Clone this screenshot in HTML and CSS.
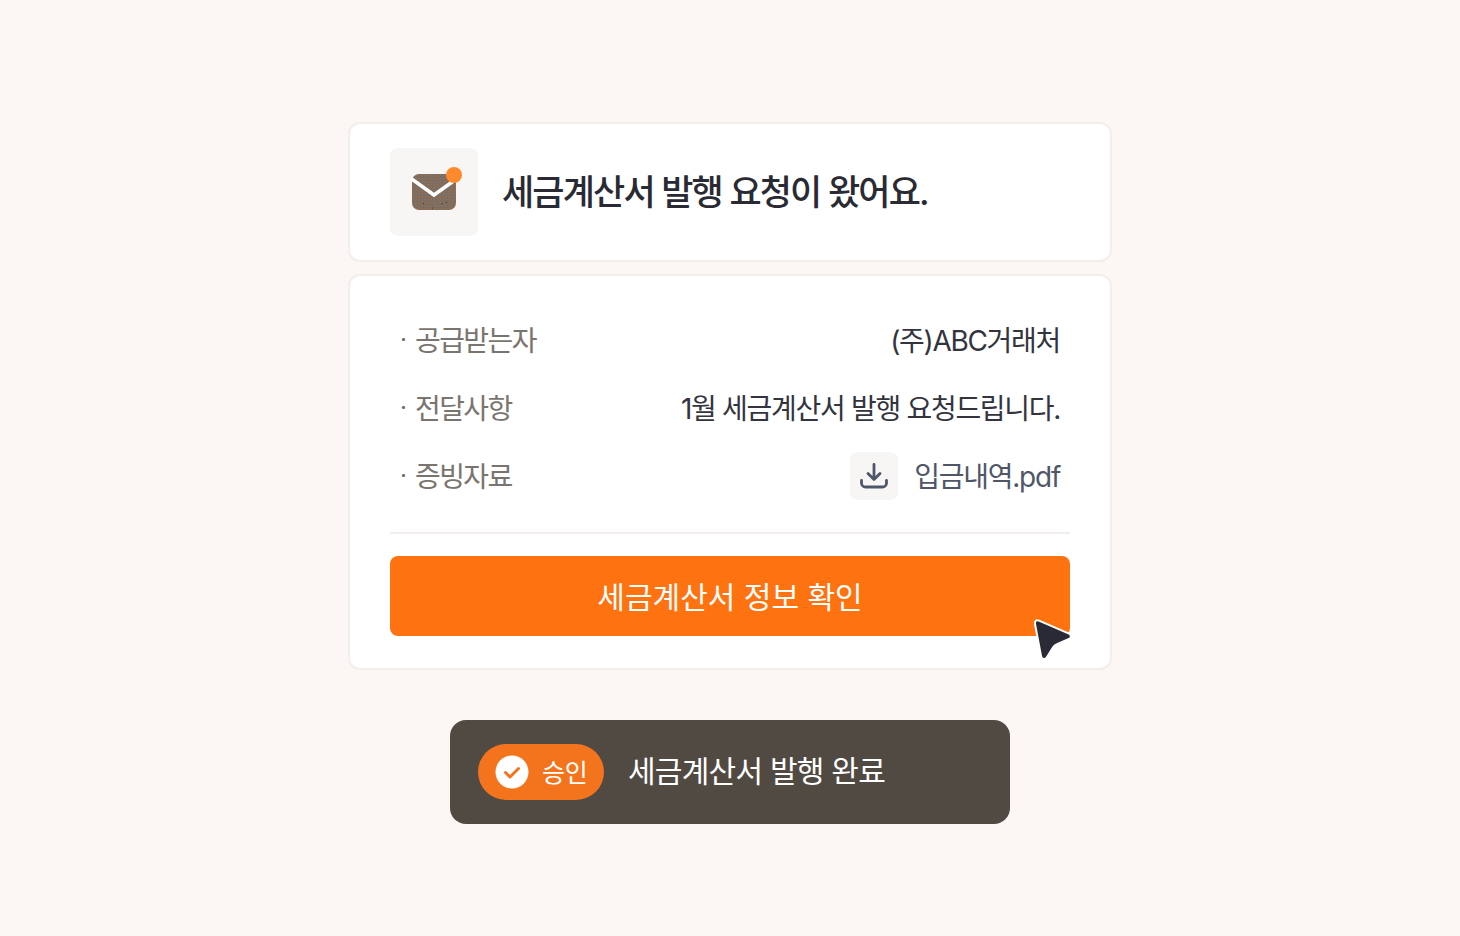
FILE: index.html
```html
<!DOCTYPE html>
<html lang="ko">
<head>
<meta charset="utf-8">
<title>세금계산서 발행 요청</title>
<link rel="stylesheet" href="styles.css">
</head>
<body>
<main class="stack">
  <section class="card header-card">
    <div class="icon-tile">
      <svg class="mail" width="52" height="46" viewBox="0 0 52 46">
        <defs>
          <pattern id="speckle" width="3" height="3" patternUnits="userSpaceOnUse">
            <rect width="3" height="3" fill="#776f67"/>
            <rect x="0" y="0" width="1" height="1" fill="#b06d38"/>
            <rect x="2" y="1" width="1" height="1" fill="#a06b40"/>
          </pattern>
        </defs>
        <rect x="2" y="8" width="44" height="36" rx="7" fill="url(#speckle)"/>
        <path d="M1 12.5 L24 29 L47 12.5" fill="none" stroke="#fff" stroke-width="3.6"/>
        <g fill="#3a3028">
          <circle cx="13.5" cy="37.5" r="0.6"/>
          <circle cx="22.5" cy="42" r="0.6"/>
          <circle cx="32" cy="37.5" r="0.6"/>
          <circle cx="36.5" cy="36.5" r="0.6"/>
        </g>
        <circle cx="44" cy="9" r="8" fill="#ff8a2b"/>
      </svg>
    </div>
    <h1 class="title">세금계산서 발행 요청이 왔어요.</h1>
  </section>
  <section class="card detail-card">
    <div class="rows">
      <div class="row"><span class="label"><span class="dot">·</span>공급받는자</span><span class="value">(주)ABC거래처</span></div>
      <div class="row"><span class="label"><span class="dot">·</span>전달사항</span><span class="value">1월 세금계산서 발행 요청드립니다.</span></div>
      <div class="row"><span class="label"><span class="dot">·</span>증빙자료</span>
        <span class="file">
          <span class="file-icon">
            <svg width="32" height="32" viewBox="0 0 32 32" fill="none" stroke="#4f5668" stroke-width="2.8" stroke-linecap="round" stroke-linejoin="round">
              <path d="M16 4.5v14.5M10 13.5l6 6 6-6"/>
              <path d="M3.5 20.5v2.5a4 4 0 0 0 4 4h17a4 4 0 0 0 4-4v-2.5"/>
            </svg>
          </span>
          <span class="file-name">입금내역.pdf</span>
        </span>
      </div>
    </div>
    <div class="action-wrap">
      <button class="action" type="button"><span class="action-text">세금계산서 정보 확인</span></button>
      <svg class="cursor" width="44" height="48" viewBox="0 0 44 48">
        <path d="M9 6.6 L39 19.6 C41.5 20.8 41.5 24 39 25 L26.5 30.5 C25 31 24 32 23 33.5 L17 43 C15 46 11.5 45.5 11 42 L5 10 C4.5 7 6.5 5.5 9 6.6 Z" fill="#292a36" stroke="#fff" stroke-width="2" stroke-linejoin="round"/>
      </svg>
    </div>
  </section>
  <section class="toast">
    <span class="pill">
      <svg width="34" height="34" viewBox="0 0 34 34">
        <circle cx="17" cy="17" r="16.5" fill="#fff"/>
        <path d="M10.5 17.5l4.5 4.5 8.5-8.5" fill="none" stroke="#f4741e" stroke-width="3" stroke-linecap="round" stroke-linejoin="round"/>
      </svg>
      <span class="pill-text">승인</span>
    </span>
    <span class="toast-text">세금계산서 발행 완료</span>
  </section>
</main>
</body>
</html>
```
FILE: styles.css
```css
* { box-sizing: border-box; }
html, body { height: 100%; }
body {
  margin: 0;
  background: #fcf7f4;
  font-family: Inter, "Noto Sans CJK KR", sans-serif;
  color: #292a33;
}
.stack {
  width: 764px;
  margin: 0 auto;
  padding-top: 122px;
  display: flex;
  flex-direction: column;
  align-items: center;
}
.card {
  width: 100%;
  background: #fff;
  border: 2px solid #f3eeeb;
  border-radius: 12px;
}
.header-card {
  height: 140px;
  padding: 0 40px;
  display: flex;
  align-items: center;
  gap: 24px;
}
.icon-tile {
  width: 88px;
  height: 88px;
  border-radius: 8px;
  background: #f7f6f4;
  display: flex;
  padding: 18px 0 0 20px;
}
.mail { display: block; }
.title {
  margin: 0;
  font-size: 35px;
  font-weight: 500;
  letter-spacing: -1.85px;
  line-height: 44px;
}
.detail-card {
  height: 396px;
  margin-top: 12px;
  padding: 30px 40px 0;
}
.rows {
  height: 228px;
  border-bottom: 2px solid #f3eeeb;
  padding: 0 10px;
  display: flex;
  flex-direction: column;
}
.row {
  height: 68px;
  display: flex;
  align-items: center;
  justify-content: space-between;
}
.label {
  padding-bottom: 2px;
  font-size: 28px;
  letter-spacing: -1.6px;
  color: #7a746e;
  display: flex;
  align-items: center;
}
.dot {
  width: 15px;
  font-size: 24px;
  letter-spacing: 0;
  color: #6f6962;
}
.value {
  padding-bottom: 2px;
  font-size: 28px;
  letter-spacing: -1.3px;
  color: #33343d;
}
.file {
  display: flex;
  align-items: center;
  gap: 16px;
}
.file-icon {
  width: 48px;
  height: 48px;
  border-radius: 8px;
  background: #f7f6f4;
  display: flex;
  align-items: center;
  justify-content: center;
}
.file-name {
  padding-bottom: 2px;
  font-size: 28px;
  letter-spacing: -1.25px;
  color: #4f5668;
}
.action-wrap {
  position: relative;
  margin-top: 22px;
}
.action {
  display: block;
  width: 100%;
  height: 80px;
  padding: 0 0 2px;
  border: 0;
  border-radius: 8px;
  background: #ff7210;
  color: #fff;
  font-family: inherit;
  font-size: 30px;
  font-weight: 400;
  letter-spacing: 0;
}
.cursor {
  position: absolute;
  left: 640px;
  top: 58px;
}
.toast {
  width: 560px;
  height: 104px;
  margin-top: 50px;
  padding-left: 28px;
  background: #514a43;
  border-radius: 16px;
  display: flex;
  align-items: center;
  gap: 24px;
}
.pill {
  width: 126px;
  height: 56px;
  border-radius: 28px;
  background: #f4741e;
  padding-left: 17px;
  display: flex;
  align-items: center;
  gap: 13px;
}
.pill-text {
  padding-bottom: 2px;
  font-size: 25px;
  font-weight: 400;
  color: #fff;
  letter-spacing: -0.2px;
}
.toast-text {
  padding-bottom: 6px;
  font-size: 30px;
  color: #fff;
  letter-spacing: -0.75px;
}
```
